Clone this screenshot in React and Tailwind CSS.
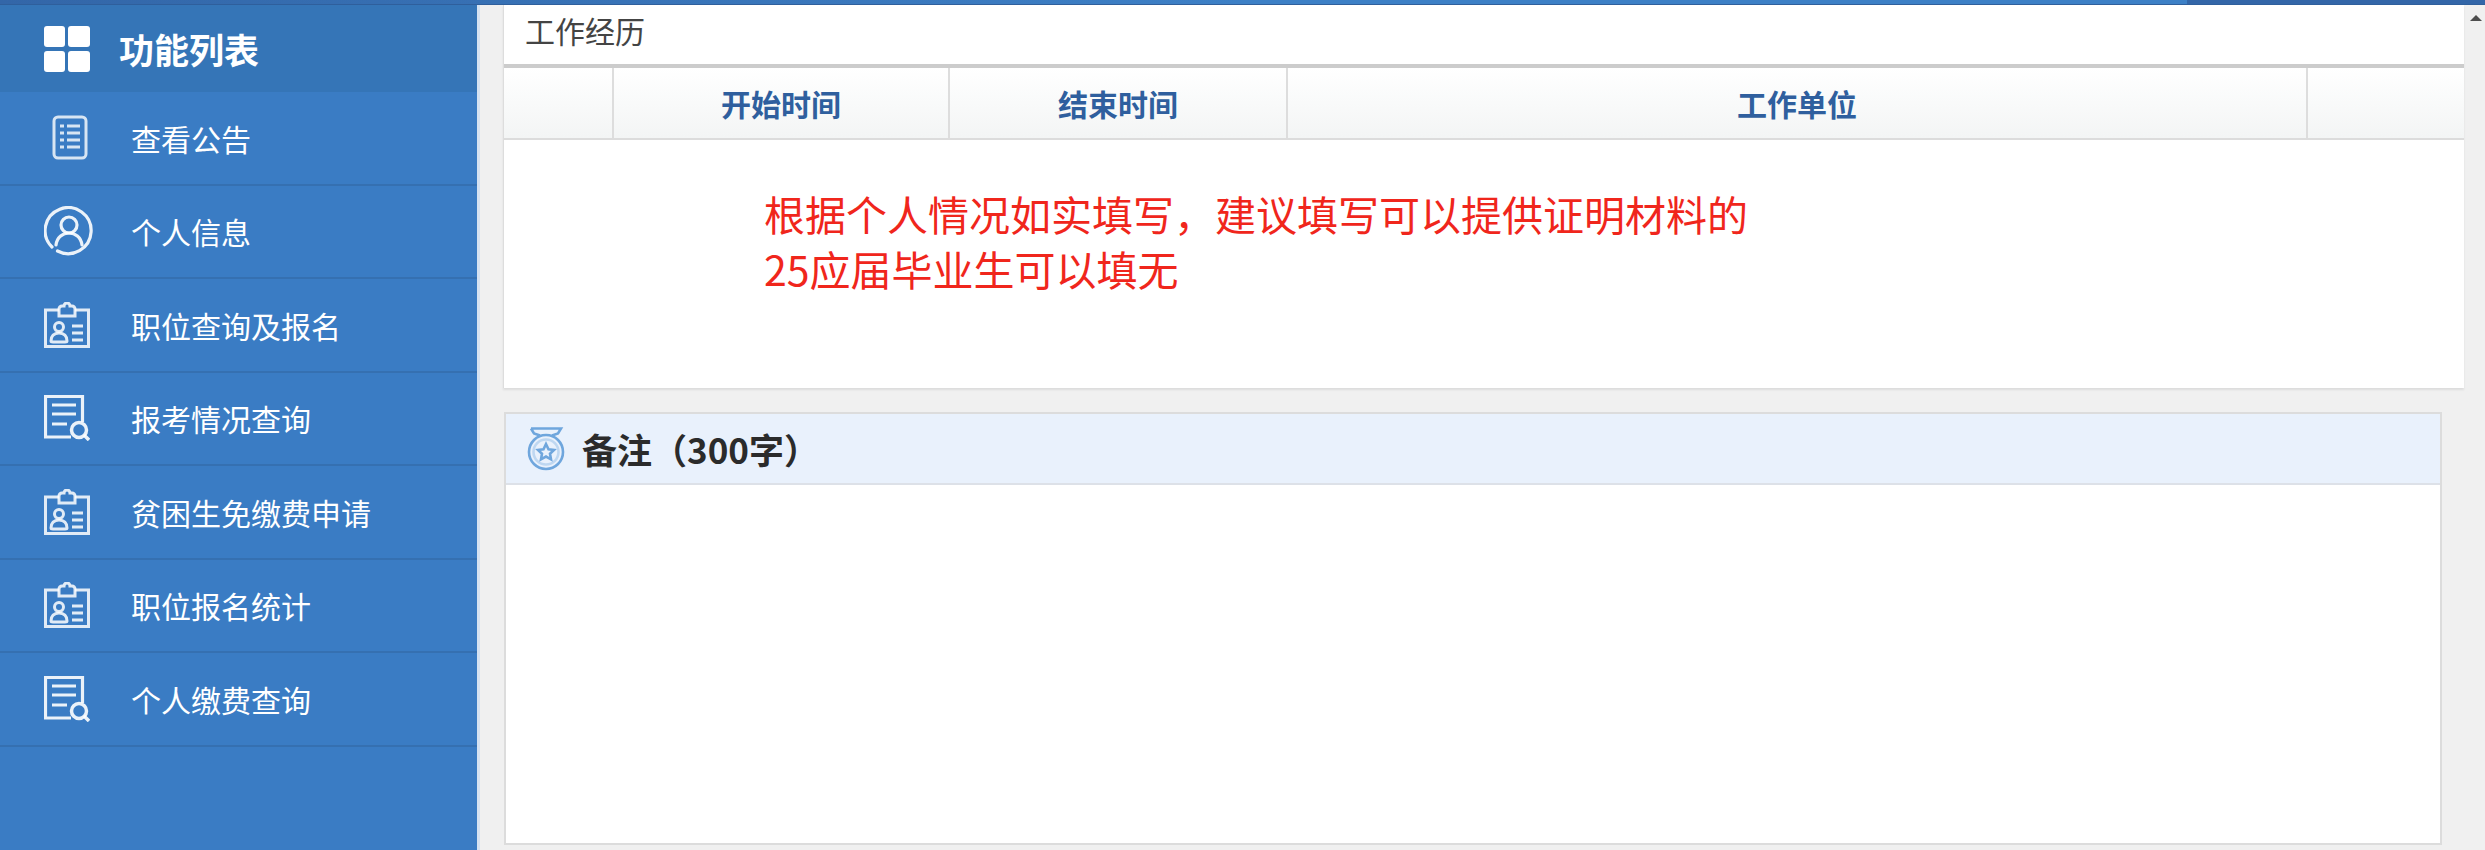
const fontStack = { fontFamily: '"Noto Sans CJK SC", "Liberation Sans", sans-serif' };

const GridIcon = () => (
  <svg width="46" height="46" viewBox="0 0 46 46" fill="#fff">
    <rect x="0" y="0" width="21" height="21" rx="3" />
    <rect x="24" y="0" width="22" height="21" rx="3" />
    <rect x="0" y="25" width="21" height="21" rx="3" />
    <rect x="24" y="25" width="22" height="21" rx="3" />
  </svg>
);

const ListIcon = () => (
  <svg width="50" height="46" viewBox="0 0 50 46" fill="none" stroke="#fff" strokeOpacity="0.8">
    <rect x="10" y="2" width="32" height="41" rx="4" strokeWidth="3" />
    <g strokeWidth="3">
      <path d="M16 11h4M23 11h13" />
      <path d="M16 18h4M23 18h13" />
      <path d="M16 25h4M23 25h13" />
      <path d="M16 32h4M23 32h13" />
    </g>
  </svg>
);

const UserIcon = () => (
  <svg width="50" height="50" viewBox="0 0 50 50" fill="none" stroke="#fff" strokeOpacity="0.9" strokeWidth="3.2" strokeLinecap="round">
    <path d="M8 41A23 23 0 1 1 13.5 45" />
    <circle cx="25" cy="19" r="8" />
    <path d="M12 39c1-8 7-12 13-12s12 4 13 12" />
  </svg>
);

const BadgeIcon = () => (
  <svg width="46" height="46" viewBox="0 0 46 46" fill="none" stroke="#fff" strokeOpacity="0.85" strokeWidth="3">
    <path d="M15 8H1.5v36.5h43V8H31" />
    <path d="M15 14V7a3 3 0 0 1 3-3h2a3 3 0 0 1 6 0h2a3 3 0 0 1 3 3v7z" />
    <circle cx="15" cy="25" r="4.5" />
    <path d="M7 39c0-5 3-8 8-8s8 3 8 8c0 1-1 1-2 1H9c-1 0-2 0-2-1z" />
    <path d="M28 24h11M28 31h11M28 38h11" />
  </svg>
);

const ReportIcon = () => (
  <svg width="46" height="46" viewBox="0 0 46 46" fill="none" stroke="#fff" strokeOpacity="0.9" strokeWidth="3.2">
    <path d="M27 42H1.5V1.5h37V27" />
    <path d="M8 10h24M8 19h24M8 29h15" strokeWidth="3.2" />
    <circle cx="35" cy="35" r="7.5" strokeWidth="3.5" />
    <path d="M40 40l5 5" strokeWidth="3.5" />
  </svg>
);

const MedalIcon = () => (
  <svg width="38" height="44" viewBox="0 0 38 44" fill="none" stroke="#6fa6dd" strokeWidth="2.6">
    <path d="M4 1.5h30l-3 5-6 2M4 1.5l3 5 6 2" />
    <circle cx="19" cy="25" r="17" />
    <circle cx="19" cy="25" r="12.5" strokeOpacity="0.35" />
    <path d="M19 17l2.5 5.2 5.5.7-4 3.8 1 5.6-5-2.7-5 2.7 1-5.6-4-3.8 5.5-.7z" />
  </svg>
);

const menuItems = [
  { label: '查看公告', Icon: ListIcon },
  { label: '个人信息', Icon: UserIcon },
  { label: '职位查询及报名', Icon: BadgeIcon },
  { label: '报考情况查询', Icon: ReportIcon },
  { label: '贫困生免缴费申请', Icon: BadgeIcon },
  { label: '职位报名统计', Icon: BadgeIcon },
  { label: '个人缴费查询', Icon: ReportIcon },
];

const Sidebar = () => (
  <aside className="w-[477px] shrink-0 bg-[#3a7cc4] text-white">
    <div className="h-[87px] bg-[#3575b7] flex items-center pl-[44px]">
      <GridIcon />
      <span className="ml-[29px] text-[35px] font-bold leading-none">功能列表</span>
    </div>
    {menuItems.map(({ label, Icon }) => (
      <div key={label} className="h-[93.5px] border-b-2 border-[#3570b1] flex items-center pl-[44px]">
        <div className="w-[50px] flex justify-start">
          <Icon />
        </div>
        <span className="ml-[37px] text-[30px] leading-none">{label}</span>
      </div>
    ))}
  </aside>
);

const HeaderCell = ({ className, children }) => (
  <div className={`flex items-center justify-center border-r-2 border-[#dddddd] text-[30px] font-bold text-[#2f5f9e] ${className}`}>
    {children}
  </div>
);

const WorkCard = () => (
  <section className="h-[383px] bg-white border-l border-[#dddddd] shadow-[0_2px_2px_#dcdcdc] flex flex-col">
    <div className="h-[59px] flex items-center pl-[21px] pb-[10px] text-[30px] text-[#444444] leading-none">工作经历</div>
    <div className="h-[76px] flex bg-gradient-to-b from-[#ffffff] to-[#f3f5f5] border-t-4 border-b-2 border-t-[#cccccc] border-b-[#dcdcdc]">
      <HeaderCell className="w-[110px]" />
      <HeaderCell className="w-[336px]">开始时间</HeaderCell>
      <HeaderCell className="w-[338px]">结束时间</HeaderCell>
      <HeaderCell className="w-[1020px]">工作单位</HeaderCell>
      <div className="flex-1" />
    </div>
    <div className="pl-[260px] pt-[46px] text-[41px] leading-[55px] text-[#f0261c]">
      <p>根据个人情况如实填写，建议填写可以提供证明材料的</p>
      <p>25应届毕业生可以填无</p>
    </div>
  </section>
);

const RemarkCard = () => (
  <section className="mt-[24px] ml-px mr-[22px] h-[433px] bg-white border-2 border-[#dcdcdc] flex flex-col">
    <div className="h-[71px] shrink-0 bg-[#e9f1fc] border-b-2 border-[#dde1e8] flex items-center pl-[21px]">
      <MedalIcon />
      <span className="ml-[17px] text-[35px] font-bold text-[#2b2b2b] leading-none">备注（300字）</span>
    </div>
  </section>
);

export default function App() {
  return (
    <div className="h-[850px] w-[2485px] overflow-hidden flex flex-col bg-[#f0f0f0]" style={fontStack}>
      <div className="h-[5px] shrink-0 border-b border-[#2f5f9c] bg-[linear-gradient(90deg,#3366a8_0%,#3d80c6_50%,#3d80c6_88%,#3366a8_88%,#3366a8_100%)]" />
      <div className="flex-1 flex min-h-0">
        <Sidebar />
        <div className="w-[3px] shrink-0 bg-[#d5e2f1]" />
        <main className="flex-1 pl-[23px] min-w-0">
          <WorkCard />
          <RemarkCard />
        </main>
        <div className="w-[21px] shrink-0 flex justify-end pr-[3px] pt-[10px]">
          <svg width="12" height="6" viewBox="0 0 12 6" fill="#4d4d4d">
            <path d="M6 0l6 6H0z" />
          </svg>
        </div>
      </div>
    </div>
  );
}
